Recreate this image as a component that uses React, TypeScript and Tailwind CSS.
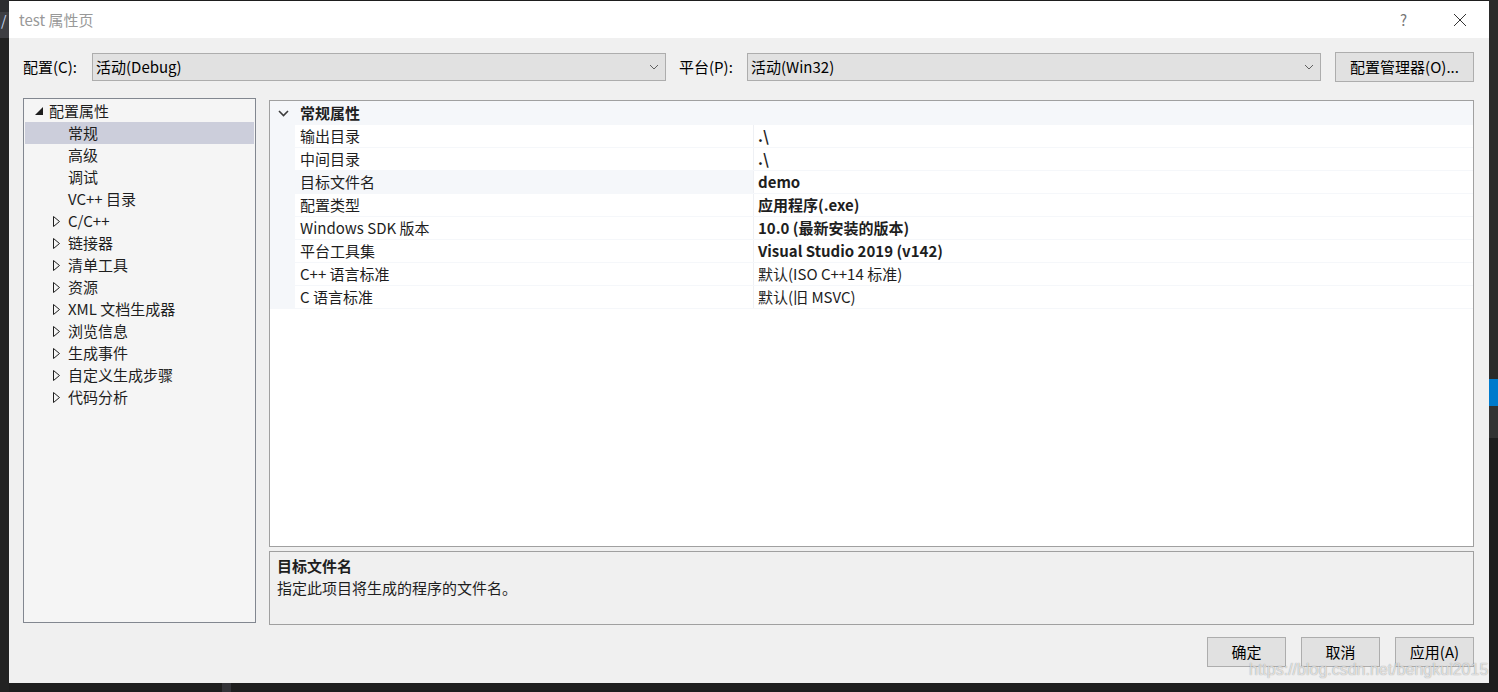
import React from "react";

const font = "font-[family-name:'Noto_Sans_CJK_SC','Noto_Sans',sans-serif]";

type TreeItem = { label: string; expandable?: boolean; selected?: boolean };

const treeItems: TreeItem[] = [
    { label: "常规", selected: true },
    { label: "高级" },
    { label: "调试" },
    { label: "VC++ 目录" },
    { label: "C/C++", expandable: true },
    { label: "链接器", expandable: true },
    { label: "清单工具", expandable: true },
    { label: "资源", expandable: true },
    { label: "XML 文档生成器", expandable: true },
    { label: "浏览信息", expandable: true },
    { label: "生成事件", expandable: true },
    { label: "自定义生成步骤", expandable: true },
    { label: "代码分析", expandable: true },
];

type Prop = { name: string; value: string; bold?: boolean; active?: boolean };

const props: Prop[] = [
    { name: "输出目录", value: ".\\", bold: true },
    { name: "中间目录", value: ".\\", bold: true },
    { name: "目标文件名", value: "demo", bold: true, active: true },
    { name: "配置类型", value: "应用程序(.exe)", bold: true },
    { name: "Windows SDK 版本", value: "10.0 (最新安装的版本)", bold: true },
    { name: "平台工具集", value: "Visual Studio 2019 (v142)", bold: true },
    { name: "C++ 语言标准", value: "默认(ISO C++14 标准)" },
    { name: "C 语言标准", value: "默认(旧 MSVC)" },
];

function ComboArrow() {
    return (
        <svg width="10" height="6" viewBox="0 0 10 6" className="shrink-0">
            <polyline points="1,1 5,5 9,1" fill="none" stroke="#606060" strokeWidth="1" />
        </svg>
    );
}

function Combo({ value }: { value: string }) {
    return (
        <div className="w-[574px] h-[28px] bg-[#e1e1e1] border border-[#adadad] flex items-center pl-[3px] pr-[6px]">
            <span className="flex-1 text-[15px] leading-[20px] text-black">{value}</span>
            <ComboArrow />
        </div>
    );
}

function Button({ label, className }: { label: string; className?: string }) {
    return (
        <button
            className={`h-[30px] bg-[#e1e1e1] border border-[#adadad] text-[15px] leading-[20px] text-black flex items-center justify-center ${className ?? ""}`}
        >
            {label}
        </button>
    );
}

function ExpandedGlyph() {
    return (
        <svg width="8" height="8" viewBox="0 0 8 8" className="shrink-0">
            <polygon points="8,0 8,8 0,8" fill="#1e1e1e" />
        </svg>
    );
}

function CollapsedGlyph() {
    return (
        <svg width="7" height="11" viewBox="0 0 7 11" className="shrink-0">
            <polygon points="0.5,0.5 6.5,5.5 0.5,10.5" fill="none" stroke="#1e1e1e" strokeWidth="1" />
        </svg>
    );
}

function Tree() {
    return (
        <div className="w-[233px] h-[525px] border border-[#828790] bg-[#f5f5f5] p-[1px]">
            <div className="h-[22px] flex items-center">
                <div className="w-[24px] flex justify-end pr-[6px]">
                    <ExpandedGlyph />
                </div>
                <span className="text-[15px] leading-[20px] text-[#1e1e1e]">配置属性</span>
            </div>
            {treeItems.map((item) => (
                <div
                    key={item.label}
                    className={`h-[22px] flex items-center ${item.selected ? "bg-[#cccedb]" : ""}`}
                >
                    <div className="w-[43px] flex justify-end pr-[8px]">
                        {item.expandable && <CollapsedGlyph />}
                    </div>
                    <span className="text-[15px] leading-[20px] text-[#1e1e1e]">{item.label}</span>
                </div>
            ))}
        </div>
    );
}

function Grid() {
    return (
        <div className="h-[447px] border border-[#a0a0a0] bg-white mt-[2px]">
            <div className="h-[24px] bg-[#f5f7fa] flex items-center">
                <div className="w-[25px] flex justify-center pl-[2px]">
                    <svg width="11" height="7" viewBox="0 0 11 7">
                        <polyline points="1,1 5.5,5.5 10,1" fill="none" stroke="#3c3c3c" strokeWidth="1.6" />
                    </svg>
                </div>
                <span className="pl-[5px] text-[15px] leading-[20px] font-bold text-[#1e1e1e]">常规属性</span>
            </div>
            {props.map((p) => (
                <div key={p.name} className="h-[23px] flex bg-[#f5f7fa]">
                    <div className="w-[25px]" />
                    <div
                        className={`w-[459px] h-[22px] flex items-center pl-[5px] border-r border-[#eef0f4] ${
                            p.active ? "bg-[#f5f7fa]" : "bg-white"
                        }`}
                    >
                        <span className="text-[15px] leading-[20px] text-[#1e1e1e]">{p.name}</span>
                    </div>
                    <div className="flex-1 h-[22px] bg-white flex items-center pl-[4px]">
                        <span
                            className={`text-[15px] leading-[20px] text-[#1e1e1e] ${p.bold ? "font-bold" : ""}`}
                        >
                            {p.value}
                        </span>
                    </div>
                </div>
            ))}
        </div>
    );
}

function Description() {
    return (
        <div className="h-[74px] border border-[#a0a0a0] bg-[#f0f0f0] px-[7px] pt-[3px]">
            <div className="text-[15px] leading-[22px] font-bold text-[#1e1e1e]">目标文件名</div>
            <div className="text-[15px] leading-[22px] text-[#1e1e1e]">指定此项目将生成的程序的文件名。</div>
        </div>
    );
}

export default function App() {
    return (
        <div className={`w-[1498px] h-[692px] bg-[#1e1e1e] relative overflow-hidden flex ${font}`}>
            {/* editor behind the dialog, left edge */}
            <div className="w-[9px] flex flex-col">
                <div className="h-[12px] bg-[#2d2d30]" />
                <div className="h-[26px] bg-[#3e3e42] text-[#c8d8f0] text-[14px] leading-[16px] overflow-hidden pl-[1px]">/</div>
                <div className="flex-1 bg-[#222222]" />
            </div>

            <div className="flex flex-col">
                <div className="w-[1480px] h-[682px] mt-[1px] bg-[#f0f0f0] flex flex-col">
                    {/* title bar */}
                    <div className="h-[37px] bg-white flex items-center pl-[10px] pr-[22px]">
                        <span className="flex-1 text-[15px] leading-[20px] text-[#999999]">test 属性页</span>
                        <span className="text-[15px] leading-[20px] text-[#777777] mr-[46px]">?</span>
                        <svg width="14" height="14" viewBox="0 0 14 14">
                            <path d="M1 1 L13 13 M13 1 L1 13" stroke="#333333" strokeWidth="1" />
                        </svg>
                    </div>

                    <div className="flex-1 flex flex-col pt-[14px] pl-[14px] pr-[15px] pb-[16px]">
                        {/* configuration row */}
                        <div className="h-[30px] flex items-center">
                            <span className="w-[69px] text-[15px] leading-[20px] text-black">配置(C):</span>
                            <Combo value="活动(Debug)" />
                            <span className="w-[68px] ml-[13px] text-[15px] leading-[20px] text-black">平台(P):</span>
                            <Combo value="活动(Win32)" />
                            <Button label="配置管理器(O)..." className="w-[139px] ml-[14px]" />
                        </div>

                        {/* main area */}
                        <div className="h-[527px] mt-[16px] flex gap-[13px]">
                            <Tree />
                            <div className="flex-1 flex flex-col gap-[4px]">
                                <Grid />
                                <Description />
                            </div>
                        </div>

                        {/* dialog buttons */}
                        <div className="mt-[12px] h-[30px] flex justify-end gap-[15px]">
                            <Button label="确定" className="w-[79px]" />
                            <Button label="取消" className="w-[79px]" />
                            <Button label="应用(A)" className="w-[79px]" />
                        </div>
                    </div>
                </div>
                <div className="flex-1 flex">
                    <div className="w-[213px]" />
                    <div className="w-[9px] bg-[#333337]" />
                </div>
            </div>

            {/* editor behind the dialog, right edge */}
            <div className="w-[9px] flex flex-col">
                <div className="h-[379px] bg-[#2b2b2b]" />
                <div className="h-[27px] bg-[#007acc]" />
                <div className="h-[32px] bg-[#333333]" />
                <div className="flex-1 bg-[#1e1e1e]" />
            </div>

            {/* watermark over the screenshot */}
            <div className="absolute left-[1249px] top-[659px] text-[16px] leading-[22px] text-white/70 font-['Liberation_Sans',sans-serif] whitespace-nowrap [text-shadow:0_0_1px_rgba(0,0,0,0.45)]">
                https://blog.csdn.net/bengkui2015
            </div>
        </div>
    );
}
